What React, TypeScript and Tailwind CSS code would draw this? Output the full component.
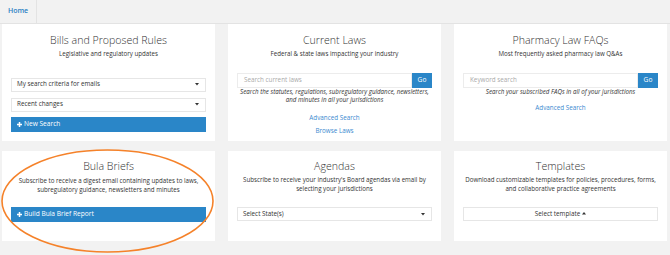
import React from "react";

const Caret = () => (
  <svg width="4" height="3" viewBox="0 0 4 3" className="shrink-0">
    <path d="M0 0 L4 0 L2 2.5 Z" fill="#333" />
  </svg>
);

const SelectBox = ({ label, center = false }: { label: string; center?: boolean }) => (
  <div
    className={`h-[14px] bg-white border border-[#e6e6e6] flex items-center ${
      center ? "justify-center" : "justify-between pl-[5px] pr-[6px]"
    } text-[6.3px] leading-none text-[#333]`}
  >
    {center ? (
      <span className="flex items-center gap-[2px]">
        {label}
        <svg width="4" height="3" viewBox="0 0 4 3">
          <path d="M0 2.5 L4 2.5 L2 0 Z" fill="#333" />
        </svg>
      </span>
    ) : (
      <>
        <span>{label}</span>
        <Caret />
      </>
    )}
  </div>
);

const BlueButton = ({ label }: { label: string }) => (
  <div className="h-[15px] bg-[#2a86c8] flex items-center pl-[6px] gap-[2px] text-white text-[6.6px] leading-none">
    <svg width="5" height="5" viewBox="0 0 5 5">
      <path d="M2.5 0 V5 M0 2.5 H5" stroke="#fff" strokeWidth="1.5" />
    </svg>
    <span>{label}</span>
  </div>
);

const SearchInput = ({ placeholder }: { placeholder: string }) => (
  <div className="flex h-[15px]">
    <div className="flex-1 bg-white border border-[#ececec] flex items-center pl-[6px] text-[6.3px] text-[#aaa] leading-none">
      {placeholder}
    </div>
    <div className="w-[20px] bg-[#2a86c8] flex items-center justify-center text-white text-[6.6px] leading-none">
      Go
    </div>
  </div>
);

const Title = ({ children }: { children: React.ReactNode }) => (
  <div className="text-center text-[10.6px] leading-[16px] font-light text-[#333]">{children}</div>
);

const Sub = ({ children, className = "" }: { children: React.ReactNode; className?: string }) => (
  <div className={`text-center text-[6.2px] leading-[8.5px] text-[#333] ${className}`}>{children}</div>
);

export default function App() {
  return (
    <div
      className="w-[670px] h-[255px] bg-[#f2f2f2] relative overflow-hidden"
      style={{ fontFamily: '"Open Sans", "Liberation Sans", sans-serif' }}
    >
      <div className="h-[24px] flex border-b border-[#e3e3e3]">
        <div className="w-[37px] border-r border-[#e3e3e3] flex items-center justify-center text-[7px] font-semibold text-[#2a7fc4]">
          Home
        </div>
      </div>

      <div className="grid grid-cols-3 gap-x-[13px] gap-y-[10px] pl-[2px] pr-[3px]">
        {/* Bills */}
        <div className="bg-white h-[117px] pt-[8px] px-[9px]">
          <Title>Bills and Proposed Rules</Title>
          <Sub className="mt-[2px]">Legislative and regulatory updates</Sub>
          <div className="mt-[19px]">
            <SelectBox label="My search criteria for emails" />
          </div>
          <div className="mt-[6px]">
            <SelectBox label="Recent changes" />
          </div>
          <div className="mt-[5px]">
            <BlueButton label="New Search" />
          </div>
        </div>

        {/* Current Laws */}
        <div className="bg-white h-[117px] pt-[8px] px-[9px]">
          <Title>Current Laws</Title>
          <Sub className="mt-[2px]">Federal &amp; state laws impacting your industry</Sub>
          <div className="mt-[14px]">
            <SearchInput placeholder="Search current laws" />
          </div>
          <Sub className="italic">
            Search the statutes, regulations, subregulatory guidance, newsletters,
            <br />
            and minutes in all your jurisdictions
          </Sub>
          <div className="mt-[9px] text-center text-[6.3px] leading-[8px] text-[#3b8ad0]">Advanced Search</div>
          <div className="mt-[5px] text-center text-[6.3px] leading-[8px] text-[#3b8ad0]">Browse Laws</div>
        </div>

        {/* Pharmacy */}
        <div className="bg-white h-[117px] pt-[8px] px-[9px]">
          <Title>Pharmacy Law FAQs</Title>
          <Sub className="mt-[2px]">Most frequently asked pharmacy law Q&amp;As</Sub>
          <div className="mt-[14px]">
            <SearchInput placeholder="Keyword search" />
          </div>
          <Sub className="italic">Search your subscribed FAQs in all of your jurisdictions</Sub>
          <div className="mt-[8px] text-center text-[6.3px] leading-[8px] text-[#3b8ad0]">Advanced Search</div>
        </div>

        {/* Bula Briefs */}
        <div className="bg-white h-[90px] pt-[7px] px-[9px]">
          <Title>Bula Briefs</Title>
          <Sub className="mt-[3px]">
            Subscribe to receive a digest email containing updates to laws,
            <br />
            subregulatory guidance, newsletters and minutes
          </Sub>
          <div className="mt-[13px]">
            <BlueButton label="Build Bula Brief Report" />
          </div>
        </div>

        {/* Agendas */}
        <div className="bg-white h-[90px] pt-[7px] px-[9px]">
          <Title>Agendas</Title>
          <Sub className="mt-[2px]">
            Subscribe to receive your industry&apos;s Board agendas via email by
            <br />
            selecting your jurisdictions
          </Sub>
          <div className="mt-[14px]">
            <SelectBox label="Select State(s)" />
          </div>
        </div>

        {/* Templates */}
        <div className="bg-white h-[90px] pt-[7px] px-[9px]">
          <Title>Templates</Title>
          <Sub className="mt-[2px]">
            Download customizable templates for policies, procedures, forms,
            <br />
            and collaborative practice agreements
          </Sub>
          <div className="mt-[14px]">
            <SelectBox label="Select template" center />
          </div>
        </div>
      </div>

      <svg
        className="absolute left-0 top-[148px] pointer-events-none"
        width="216"
        height="106"
        viewBox="0 0 216 106"
      >
        <ellipse cx="107.5" cy="53" rx="105.5" ry="51" fill="none" stroke="#f5822a" strokeWidth="1.6" />
      </svg>
    </div>
  );
}
